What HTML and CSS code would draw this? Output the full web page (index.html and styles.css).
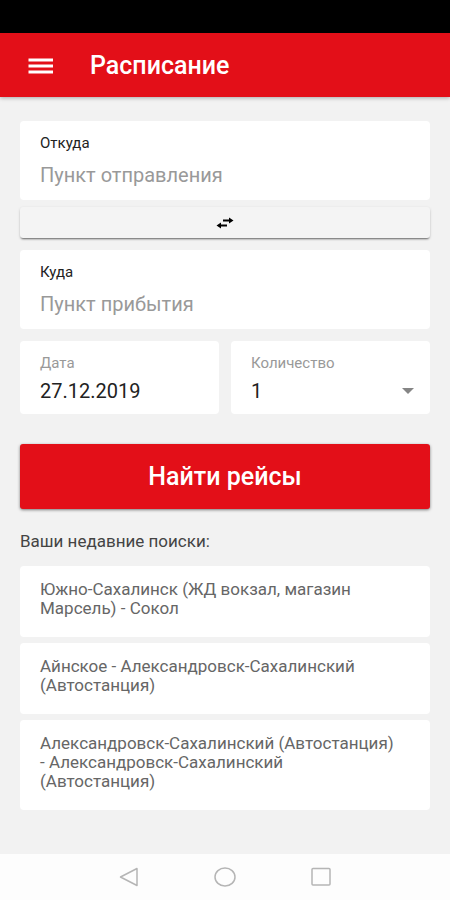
FILE: index.html
```html
<!DOCTYPE html>
<html lang="ru">
<head>
  <meta charset="utf-8">
  <meta name="viewport" content="width=device-width, initial-scale=1">
  <title>Расписание</title>
  <link rel="stylesheet" href="styles.css">
</head>
<body>
  <div class="status-bar"></div>
  <header class="app-bar">
    <button class="menu-button" type="button" aria-label="Меню">
      <svg width="26" height="18" viewBox="0 0 26 18" aria-hidden="true">
        <path d="M0.500 3H25M0.500 9H25M0.500 15H25" stroke="#fff" stroke-width="3"/>
      </svg>
    </button>
    <h1 class="app-title">Расписание</h1>
  </header>
  <main class="content">
    <form class="search">
      <div class="field">
        <label class="field-label" for="from">Откуда</label>
        <input class="field-input" id="from" type="text" placeholder="Пункт отправления">
      </div>
      <button class="swap-button" type="button" aria-label="Поменять местами">
        <svg width="18" height="12" viewBox="0 0 18 12" aria-hidden="true">
          <path d="M7 3.500H13.500M4 8.500H11" stroke="#000" stroke-width="1.800"/>
          <path d="M13 0.500L17.500 3.500L13 6.500ZM5 5.500L0.500 8.500L5 11.500Z" fill="#000"/>
        </svg>
      </button>
      <div class="field">
        <label class="field-label" for="to">Куда</label>
        <input class="field-input" id="to" type="text" placeholder="Пункт прибытия">
      </div>
      <div class="field-row">
        <div class="field field-compact">
          <label class="field-label" for="date">Дата</label>
          <input class="field-input" id="date" type="text" value="27.12.2019">
        </div>
        <div class="field field-compact">
          <label class="field-label" for="count">Количество</label>
          <div class="select-box">
            <select class="field-input" id="count">
              <option>1</option>
              <option>2</option>
              <option>3</option>
            </select>
            <svg class="select-arrow" width="12" height="6" viewBox="0 0 12 6" aria-hidden="true">
              <path d="M0 0H12L6 6Z" fill="#858585"/>
            </svg>
          </div>
        </div>
      </div>
      <button class="submit-button" type="submit">Найти рейсы</button>
    </form>
    <h2 class="recent-title">Ваши недавние поиски:</h2>
    <div class="recent-list">
      <a class="recent-item" href="#">Южно-Сахалинск (ЖД вокзал, магазин Марсель) - Сокол</a>
      <a class="recent-item" href="#">Айнское - Александровск-Сахалинский (Автостанция)</a>
      <a class="recent-item" href="#">Александровск-Сахалинский (Автостанция)<br>- Александровск-Сахалинский<br>(Автостанция)</a>
    </div>
  </main>
  <nav class="system-nav">
    <button class="nav-button" type="button" aria-label="Назад">
      <svg width="22" height="22" viewBox="0 0 22 22" aria-hidden="true">
        <path d="M19 2.500V19.500L2.500 11Z" fill="none" stroke="#b5b5b5" stroke-width="1.500" stroke-linejoin="round"/>
      </svg>
    </button>
    <button class="nav-button" type="button" aria-label="Домой">
      <svg width="22" height="22" viewBox="0 0 22 22" aria-hidden="true">
        <ellipse cx="11" cy="11" rx="10" ry="9" fill="none" stroke="#b5b5b5" stroke-width="1.500"/>
      </svg>
    </button>
    <button class="nav-button" type="button" aria-label="Недавние приложения">
      <svg width="22" height="22" viewBox="0 0 22 22" aria-hidden="true">
        <rect x="2" y="2.500" width="18" height="16.500" rx="1" fill="none" stroke="#b5b5b5" stroke-width="1.500"/>
      </svg>
    </button>
  </nav>
</body>
</html>
```
FILE: styles.css
```css
* {
  box-sizing: border-box;
}

body {
  margin: 0;
  min-height: 100vh;
  display: flex;
  flex-direction: column;
  background: #f2f2f2;
  color: #222;
  font-family: Roboto, "Liberation Sans", sans-serif;
}

button,
input,
select {
  font-family: inherit;
}

button {
  padding: 0;
  border: 0;
  cursor: pointer;
}

.status-bar {
  height: 33px;
  background: #000;
}

.app-bar {
  display: flex;
  align-items: center;
  gap: 36px;
  height: 64px;
  padding: 2px 28px 0;
  background: #e30f18;
  box-shadow: 0 1px 4px rgba(0, 0, 0, 0.3);
}

.menu-button {
  display: flex;
  background: none;
}

.app-title {
  margin: 0;
  color: #fff;
  font-size: 25px;
  font-weight: 500;
  line-height: 32px;
}

.content {
  flex: 1;
  padding: 24px 20px;
}

.search {
  display: flex;
  flex-direction: column;
}

.field {
  display: flex;
  flex-direction: column;
  gap: 8px;
  min-width: 0;
  padding: 12px 20px 11px;
  border-radius: 4px;
  background: #fff;
}

.field-label {
  font-size: 15px;
  line-height: 20px;
}

.field-input {
  width: 100%;
  height: 28px;
  padding: 0;
  border: 0;
  outline: 0;
  appearance: none;
  background: none;
  color: #222;
  font-size: 20px;
}

.field-input::placeholder {
  color: #999;
  opacity: 1;
}

.swap-button {
  display: flex;
  align-items: center;
  justify-content: center;
  height: 31px;
  margin: 7px 0 12px;
  border-radius: 3px;
  background: #f4f4f4;
  box-shadow: 0 2px 2px -1px rgba(0, 0, 0, 0.5), 0 1px 3px rgba(0, 0, 0, 0.15);
}

.field-row {
  display: grid;
  grid-template-columns: 1fr 1fr;
  gap: 12px;
  margin-top: 12px;
}

.field-compact {
  gap: 4px;
  padding-bottom: 9px;
}

.field-compact .field-label {
  color: #999;
}

.select-box {
  display: grid;
  align-items: center;
}

.select-box > * {
  grid-area: 1 / 1;
}

.select-arrow {
  justify-self: end;
  margin-right: -4px;
  pointer-events: none;
}

.submit-button {
  height: 65px;
  margin-top: 30px;
  border-radius: 3px;
  background: #e30f18;
  box-shadow: 0 1px 3px rgba(0, 0, 0, 0.5);
  color: #fff;
  font-size: 25px;
  font-weight: 500;
}

.recent-title {
  margin: 20px 0 13px;
  color: #444;
  font-size: 17px;
  font-weight: 400;
  line-height: 24px;
}

.recent-list {
  display: flex;
  flex-direction: column;
  gap: 6px;
}

.recent-item {
  padding: 14px 20px 19px;
  border-radius: 4px;
  background: #fff;
  color: #666;
  font-size: 17px;
  line-height: 19px;
  text-decoration: none;
}

.system-nav {
  display: flex;
  align-items: center;
  justify-content: center;
  gap: 74px;
  height: 46px;
  background: #fdfdfd;
}

.nav-button {
  display: flex;
  background: none;
}
```
